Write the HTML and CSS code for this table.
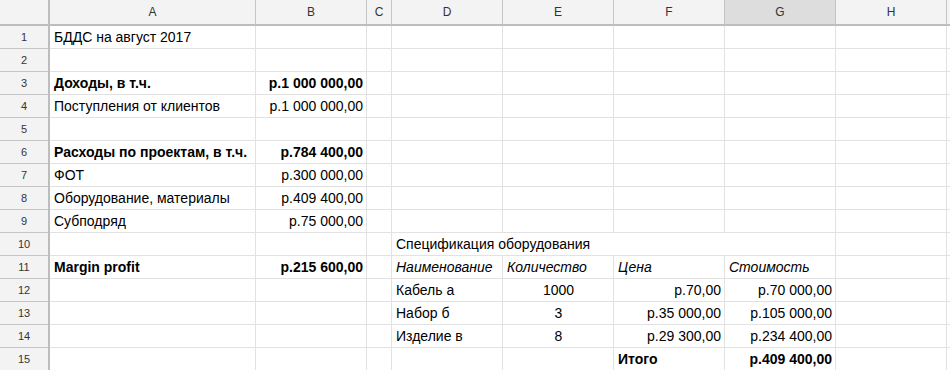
FILE: index.html
```html
<!DOCTYPE html>
<html lang="ru">
<head>
<meta charset="utf-8">
<title>БДДС на август 2017</title>
<link rel="stylesheet" href="styles.css">
</head>
<body>
<div class="sheet">
  <div class="corner"></div>
  <div class="hd">A</div><div class="hd">B</div><div class="hd">C</div><div class="hd">D</div><div class="hd">E</div><div class="hd">F</div><div class="hd sel">G</div><div class="hd">H</div><div class="hd last"></div>

  <div class="rh">1</div><div class="c">БДДС на август 2017</div><div class="c"></div><div class="c"></div><div class="c"></div><div class="c"></div><div class="c"></div><div class="c"></div><div class="c"></div><div class="c last"></div>

  <div class="rh">2</div><div class="c"></div><div class="c"></div><div class="c"></div><div class="c"></div><div class="c"></div><div class="c"></div><div class="c"></div><div class="c"></div><div class="c last"></div>

  <div class="rh">3</div><div class="c b">Доходы, в т.ч.</div><div class="c b r">р.1 000 000,00</div><div class="c"></div><div class="c"></div><div class="c"></div><div class="c"></div><div class="c"></div><div class="c"></div><div class="c last"></div>

  <div class="rh">4</div><div class="c">Поступления от клиентов</div><div class="c r">р.1 000 000,00</div><div class="c"></div><div class="c"></div><div class="c"></div><div class="c"></div><div class="c"></div><div class="c"></div><div class="c last"></div>

  <div class="rh">5</div><div class="c"></div><div class="c"></div><div class="c"></div><div class="c"></div><div class="c"></div><div class="c"></div><div class="c"></div><div class="c"></div><div class="c last"></div>

  <div class="rh">6</div><div class="c b">Расходы по проектам, в т.ч.</div><div class="c b r">р.784 400,00</div><div class="c"></div><div class="c"></div><div class="c"></div><div class="c"></div><div class="c"></div><div class="c"></div><div class="c last"></div>

  <div class="rh">7</div><div class="c">ФОТ</div><div class="c r">р.300 000,00</div><div class="c"></div><div class="c"></div><div class="c"></div><div class="c"></div><div class="c"></div><div class="c"></div><div class="c last"></div>

  <div class="rh">8</div><div class="c">Оборудование, материалы</div><div class="c r">р.409 400,00</div><div class="c"></div><div class="c"></div><div class="c"></div><div class="c"></div><div class="c"></div><div class="c"></div><div class="c last"></div>

  <div class="rh">9</div><div class="c">Субподряд</div><div class="c r">р.75 000,00</div><div class="c"></div><div class="c"></div><div class="c"></div><div class="c"></div><div class="c"></div><div class="c"></div><div class="c last"></div>

  <div class="rh">10</div><div class="c"></div><div class="c"></div><div class="c"></div><div class="c span4">Спецификация оборудования</div><div class="c"></div><div class="c last"></div>

  <div class="rh">11</div><div class="c b">Margin profit</div><div class="c b r">р.215 600,00</div><div class="c"></div><div class="c i">Наименование</div><div class="c i">Количество</div><div class="c i">Цена</div><div class="c i">Стоимость</div><div class="c"></div><div class="c last"></div>

  <div class="rh">12</div><div class="c"></div><div class="c"></div><div class="c"></div><div class="c">Кабель а</div><div class="c ctr">1000</div><div class="c r">р.70,00</div><div class="c r">р.70 000,00</div><div class="c"></div><div class="c last"></div>

  <div class="rh">13</div><div class="c"></div><div class="c"></div><div class="c"></div><div class="c">Набор б</div><div class="c ctr">3</div><div class="c r">р.35 000,00</div><div class="c r">р.105 000,00</div><div class="c"></div><div class="c last"></div>

  <div class="rh">14</div><div class="c"></div><div class="c"></div><div class="c"></div><div class="c">Изделие в</div><div class="c ctr">8</div><div class="c r">р.29 300,00</div><div class="c r">р.234 400,00</div><div class="c"></div><div class="c last"></div>

  <div class="rh">15</div><div class="c"></div><div class="c"></div><div class="c"></div><div class="c"></div><div class="c"></div><div class="c b">Итого</div><div class="c b r">р.409 400,00</div><div class="c"></div><div class="c last"></div>
</div>
</body>
</html>
```

FILE: styles.css
```css
html, body {
  margin: 0;
  padding: 0;
  background: #ffffff;
  overflow: hidden;
}

.sheet {
  display: grid;
  grid-template-columns: 50px 206px 111px 25px 111px 111px 111px 111px 111px 1fr;
  grid-template-rows: 26px repeat(15, 23px);
  width: 950px;
  font-family: "Liberation Sans", Arial, sans-serif;
  font-size: 14px;
  color: #000000;
}

.sheet > div {
  box-sizing: border-box;
  white-space: nowrap;
  overflow: hidden;
}

.corner {
  background: #f3f3f3;
  border-right: 2px solid #bdbdbd;
  border-bottom: 2px solid #bdbdbd;
}

.hd {
  background: #f3f3f3;
  border-right: 1px solid #c4c4c4;
  border-bottom: 2px solid #bdbdbd;
  color: #333333;
  font-size: 12px;
  display: flex;
  align-items: center;
  justify-content: center;
}

.hd.sel {
  background: #dddddd;
}

.rh {
  background: #f3f3f3;
  border-right: 2px solid #bdbdbd;
  border-bottom: 1px solid #c4c4c4;
  color: #333333;
  font-size: 11px;
  display: flex;
  align-items: center;
  justify-content: center;
}

.c {
  border-right: 1px solid #e2e2e2;
  border-bottom: 1px solid #e2e2e2;
  padding: 0 3px 0 4px;
  display: flex;
  align-items: center;
}

.c.last,
.hd.last {
  border-right: none;
}

.span4 {
  grid-column: span 4;
}

.r {
  justify-content: flex-end;
}

.ctr {
  justify-content: center;
}

.b {
  font-weight: bold;
}

.i {
  font-style: italic;
}
```
